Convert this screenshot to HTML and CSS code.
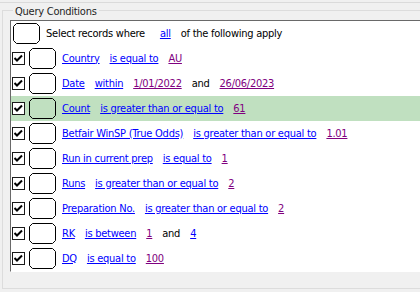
FILE: index.html
```html
<!DOCTYPE html>
<html>
<head>
	<meta charset="utf-8">
	<title>Query Conditions</title>
	<link rel="stylesheet" href="styles.css">
</head>
<body>
<div class="frame">
	<fieldset class="grup">
		<legend>Query Conditions</legend>

		<div class="liste">

			<div class="satir">
				<svg class="kutu" width="27" height="21"><polygon points="3.5,0.5 23.5,0.5 26.5,3.5 26.5,17.5 23.5,20.5 3.5,20.5 0.5,17.5 0.5,3.5"/></svg>
				<span class="yazi">Select records where</span>
				<a href="#" class="alan hepsi">all</a>
				<span class="yazi">of the following apply</span>
			</div>

			<div class="satir">
				<svg class="secim" width="13" height="13"><rect x="0.5" y="0.5" width="12" height="12"/><polyline points="2.5,6 5,8.5 10,3.5"/></svg>
				<svg class="kutu" width="27" height="21"><polygon points="3.5,0.5 23.5,0.5 26.5,3.5 26.5,17.5 23.5,20.5 3.5,20.5 0.5,17.5 0.5,3.5"/></svg>
				<a href="#" class="alan">Country</a>
				<a href="#" class="alan">is equal to</a>
				<a href="#" class="deger">AU</a>
			</div>

			<div class="satir">
				<svg class="secim" width="13" height="13"><rect x="0.5" y="0.5" width="12" height="12"/><polyline points="2.5,6 5,8.5 10,3.5"/></svg>
				<svg class="kutu" width="27" height="21"><polygon points="3.5,0.5 23.5,0.5 26.5,3.5 26.5,17.5 23.5,20.5 3.5,20.5 0.5,17.5 0.5,3.5"/></svg>
				<a href="#" class="alan">Date</a>
				<a href="#" class="alan">within</a>
				<a href="#" class="deger">1/01/2022</a>
				<span class="yazi">and</span>
				<a href="#" class="deger">26/06/2023</a>
			</div>

			<div class="satir secili">
				<svg class="secim" width="13" height="13"><rect x="0.5" y="0.5" width="12" height="12"/><polyline points="2.5,6 5,8.5 10,3.5"/></svg>
				<svg class="kutu" width="27" height="21"><polygon points="3.5,0.5 23.5,0.5 26.5,3.5 26.5,17.5 23.5,20.5 3.5,20.5 0.5,17.5 0.5,3.5"/></svg>
				<a href="#" class="alan">Count</a>
				<a href="#" class="alan">is greater than or equal to</a>
				<a href="#" class="deger">61</a>
			</div>

			<div class="satir">
				<svg class="secim" width="13" height="13"><rect x="0.5" y="0.5" width="12" height="12"/><polyline points="2.5,6 5,8.5 10,3.5"/></svg>
				<svg class="kutu" width="27" height="21"><polygon points="3.5,0.5 23.5,0.5 26.5,3.5 26.5,17.5 23.5,20.5 3.5,20.5 0.5,17.5 0.5,3.5"/></svg>
				<a href="#" class="alan">Betfair WinSP (True Odds)</a>
				<a href="#" class="alan">is greater than or equal to</a>
				<a href="#" class="deger">1.01</a>
			</div>

			<div class="satir">
				<svg class="secim" width="13" height="13"><rect x="0.5" y="0.5" width="12" height="12"/><polyline points="2.5,6 5,8.5 10,3.5"/></svg>
				<svg class="kutu" width="27" height="21"><polygon points="3.5,0.5 23.5,0.5 26.5,3.5 26.5,17.5 23.5,20.5 3.5,20.5 0.5,17.5 0.5,3.5"/></svg>
				<a href="#" class="alan">Run in current prep</a>
				<a href="#" class="alan">is equal to</a>
				<a href="#" class="deger">1</a>
			</div>

			<div class="satir">
				<svg class="secim" width="13" height="13"><rect x="0.5" y="0.5" width="12" height="12"/><polyline points="2.5,6 5,8.5 10,3.5"/></svg>
				<svg class="kutu" width="27" height="21"><polygon points="3.5,0.5 23.5,0.5 26.5,3.5 26.5,17.5 23.5,20.5 3.5,20.5 0.5,17.5 0.5,3.5"/></svg>
				<a href="#" class="alan">Runs</a>
				<a href="#" class="alan">is greater than or equal to</a>
				<a href="#" class="deger">2</a>
			</div>

			<div class="satir">
				<svg class="secim" width="13" height="13"><rect x="0.5" y="0.5" width="12" height="12"/><polyline points="2.5,6 5,8.5 10,3.5"/></svg>
				<svg class="kutu" width="27" height="21"><polygon points="3.5,0.5 23.5,0.5 26.5,3.5 26.5,17.5 23.5,20.5 3.5,20.5 0.5,17.5 0.5,3.5"/></svg>
				<a href="#" class="alan">Preparation No.</a>
				<a href="#" class="alan">is greater than or equal to</a>
				<a href="#" class="deger">2</a>
			</div>

			<div class="satir">
				<svg class="secim" width="13" height="13"><rect x="0.5" y="0.5" width="12" height="12"/><polyline points="2.5,6 5,8.5 10,3.5"/></svg>
				<svg class="kutu" width="27" height="21"><polygon points="3.5,0.5 23.5,0.5 26.5,3.5 26.5,17.5 23.5,20.5 3.5,20.5 0.5,17.5 0.5,3.5"/></svg>
				<a href="#" class="alan">RK</a>
				<a href="#" class="alan">is between</a>
				<a href="#" class="deger">1</a>
				<span class="yazi">and</span>
				<a href="#" class="alan">4</a>
			</div>

			<div class="satir">
				<svg class="secim" width="13" height="13"><rect x="0.5" y="0.5" width="12" height="12"/><polyline points="2.5,6 5,8.5 10,3.5"/></svg>
				<svg class="kutu" width="27" height="21"><polygon points="3.5,0.5 23.5,0.5 26.5,3.5 26.5,17.5 23.5,20.5 3.5,20.5 0.5,17.5 0.5,3.5"/></svg>
				<a href="#" class="alan">DQ</a>
				<a href="#" class="alan">is equal to</a>
				<a href="#" class="deger">100</a>
			</div>

		</div>
	</fieldset>
</div>
</body>
</html>
```

FILE: styles.css
```css
body {
	margin: 0;
	background-color: #f0f0f0;
	overflow: hidden;
	font-family: "DejaVu Sans Condensed", "Liberation Sans", sans-serif;
	font-size: 11px;
	letter-spacing: -0.25px;
	color: #000;
}

.frame {
	margin-top: 2px;
	border-top: 1px solid #dadada;
}

.grup {
	margin: 0 -40px 0 2px;
	padding: 2px 0 16px 7px;
	border: 1px solid #dcdcdc;
}

.grup legend {
	margin-left: 3px;
	padding: 2px 2px 0 2px;
	line-height: 13px;
	color: #1e1e1e;
}

.liste {
	background-color: #fff;
	border-top: 1px solid #696969;
	border-left: 1px solid #696969;
	border-bottom: 1px solid #fff;
}

.satir {
	display: flex;
	align-items: center;
	height: 25px;
	padding-left: 2px;
	white-space: nowrap;
}

/* secili satir yesil */
.secili {
	background-color: #c0e0c0;
}

.secim {
	margin-right: 4px;
	margin-left: -1px;
}

.secim rect {
	fill: #fff;
	stroke: #1a1a1a;
}

.secim polyline {
	fill: none;
	stroke: #000;
	stroke-width: 2;
}

.kutu {
	margin-right: 6px;
}

.kutu polygon {
	fill: none;
	stroke: #000;
}

.yazi, .alan, .deger {
	margin-right: 10px;
	line-height: 14px;
}

.alan {
	color: #0000ff;
	text-decoration: underline;
}

.deger {
	color: #800080;
	text-decoration: underline;
}

.hepsi {
	margin-left: 5px;
}
```
